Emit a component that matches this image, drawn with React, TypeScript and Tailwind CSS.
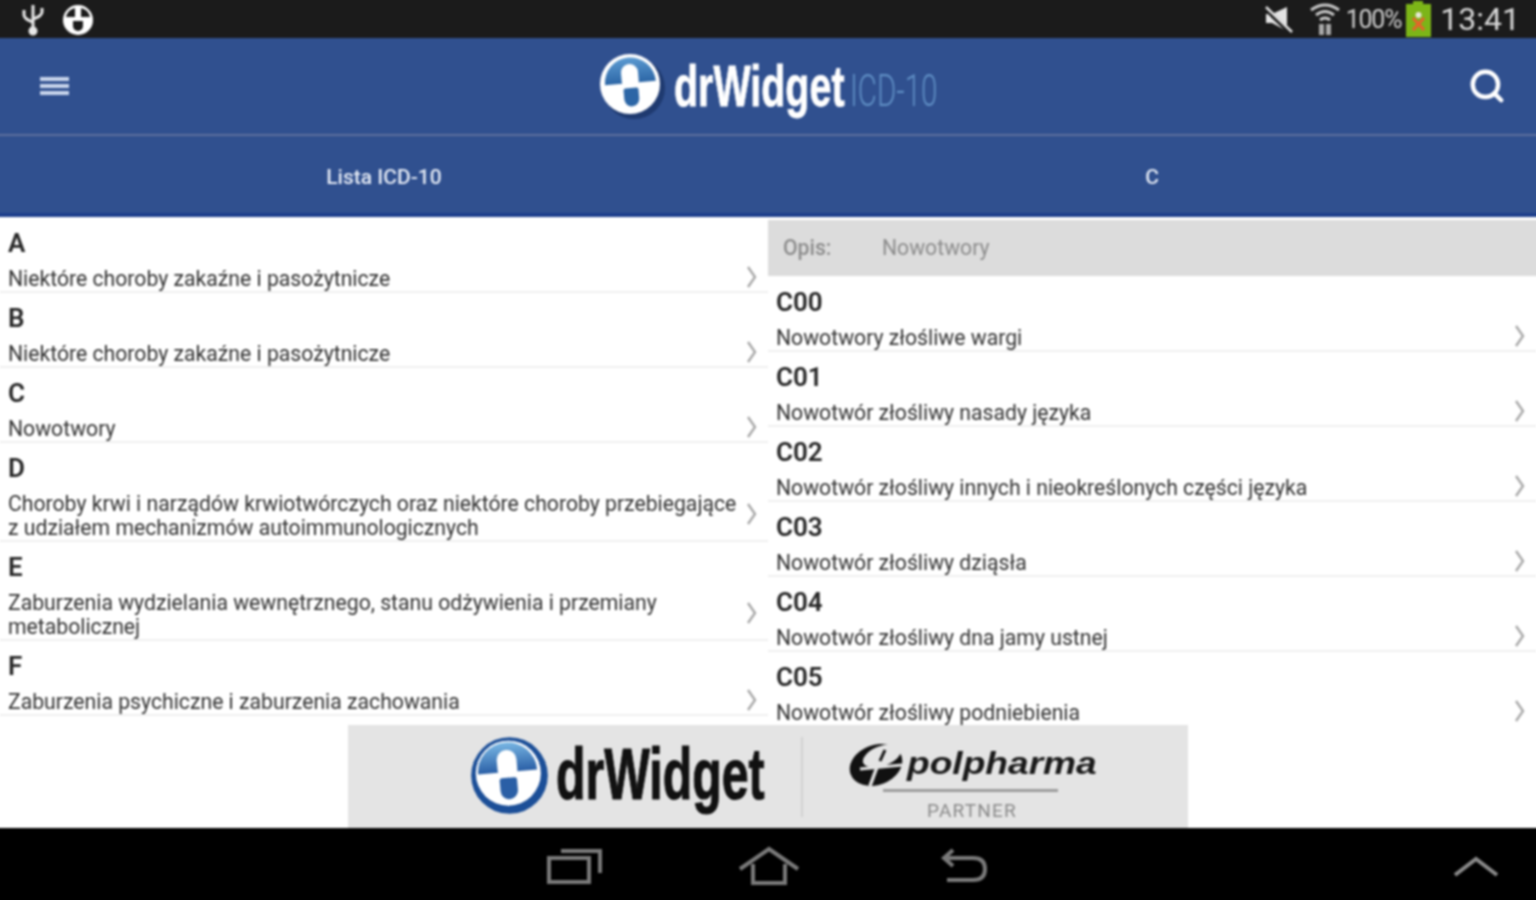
import { Search } from "lucide-react";

const leftRows = [
  { code: "A", text: ["Niektóre choroby zakaźne i pasożytnicze"] },
  { code: "B", text: ["Niektóre choroby zakaźne i pasożytnicze"] },
  { code: "C", text: ["Nowotwory"] },
  {
    code: "D",
    text: [
      "Choroby krwi i narządów krwiotwórczych oraz niektóre choroby przebiegające",
      "z udziałem mechanizmów autoimmunologicznych",
    ],
  },
  {
    code: "E",
    text: ["Zaburzenia wydzielania wewnętrznego, stanu odżywienia i przemiany", "metabolicznej"],
  },
  { code: "F", text: ["Zaburzenia psychiczne i zaburzenia zachowania"] },
];

const rightRows = [
  { code: "C00", text: ["Nowotwory złośliwe wargi"] },
  { code: "C01", text: ["Nowotwór złośliwy nasady języka"] },
  { code: "C02", text: ["Nowotwór złośliwy innych i nieokreślonych części języka"] },
  { code: "C03", text: ["Nowotwór złośliwy dziąsła"] },
  { code: "C04", text: ["Nowotwór złośliwy dna jamy ustnej"] },
  { code: "C05", text: ["Nowotwór złośliwy podniebienia"] },
];

function Chevron() {
  return (
    <svg width="12" height="24" viewBox="0 0 12 24" fill="none" className="shrink-0">
      <path d="M3 2 L10 12 L3 22" stroke="#a8a8a8" strokeWidth="2.4" />
    </svg>
  );
}

function Row({ code, text }: { code: string; text: string[] }) {
  return (
    <div className="flex items-end border-b-2 border-[#efefef] pl-2 pr-[11px]">
      <div className="flex-1 min-w-0">
        <div className="text-[26px] leading-[30px] pt-[10px] box-content font-semibold text-[#262626]">{code}</div>
        <div className="pt-[9px] text-[21.2px] leading-[24px] text-[#333333] whitespace-nowrap">
          {text.map((t) => (
            <div key={t}>{t}</div>
          ))}
        </div>
      </div>
      <div className={text.length > 1 ? "mb-[14px]" : "mb-[2px]"}>
        <Chevron />
      </div>
    </div>
  );
}

function Logo({ id, size, rim, light, dark, ringed }: { id: string; size: number; rim: string; light: string; dark: string; ringed?: boolean }) {
  return (
    <svg width={size} height={size} viewBox="0 0 68 68">
      <defs>
        <linearGradient id={id} x1="0" y1="0" x2="0" y2="1">
          <stop offset="0" stopColor={light} />
          <stop offset="1" stopColor={dark} />
        </linearGradient>
      </defs>
      {ringed ? (
        <>
          <circle cx="34" cy="34" r="33" fill={rim} />
          <circle cx="33" cy="32" r="28" fill="#ffffff" />
        </>
      ) : (
        <>
          <circle cx="36" cy="36" r="31" fill={rim} />
          <circle cx="32" cy="32" r="30" fill="#ffffff" />
        </>
      )}
      <g transform="rotate(-5 32 32)">
        <path d="M7 31 A25.5 25.5 0 0 1 58 31 Z" fill={`url(#${id})`} />
        <rect x="24" y="12" width="17" height="26" rx="8.5" fill="#ffffff" />
        <path d="M25 38 Q25 36 27 36 H38 Q40 36 40 38 V47 A7.5 7.5 0 0 1 25 47 Z" fill={dark} />
      </g>
    </svg>
  );
}

export default function App() {
  return (
    <div className="w-[1536px] h-[900px] overflow-hidden bg-black">
      {/* slightly oversized so the blur does not fade at the page edge */}
      <div className="w-[1544px] h-[908px] -m-[4px] flex flex-col bg-white font-['Roboto','Liberation_Sans',sans-serif] blur-[0.9px]">
        {/* status bar */}
        <div className="h-[42px] shrink-0 pt-[4px] px-[4px] bg-[#1b1b1b] flex items-center text-[#d4d4d4]">
          <svg width="24" height="34" viewBox="0 0 24 34" className="ml-[21px]" fill="none" stroke="#e8e8e8" strokeWidth="3">
            <path d="M12 3 V30" />
            <path d="M3 8 V13 Q3 17 12 20" />
            <path d="M21 6 V10 Q21 14 12 17" />
            <circle cx="12" cy="29" r="3" fill="#e8e8e8" />
          </svg>
          <svg width="34" height="34" viewBox="0 0 34 34" className="ml-[16px]">
            <circle cx="17" cy="18" r="15" fill="#ffffff" />
            <path d="M5 15 A12 12 0 0 1 14 6 L14 15 Z" fill="#1b1b1b" />
            <path d="M20 6 A12 12 0 0 1 29 15 L20 15 Z" fill="#1b1b1b" />
            <path d="M12 19 H22 V24 A5 5 0 0 1 12 24 Z" fill="#1b1b1b" />
          </svg>
          <div className="flex-1" />
          <svg width="32" height="32" viewBox="0 0 32 32" className="mr-[14px]">
            <path d="M3 11 H9 L24 4 V28 L9 20 H3 Z" fill="#e4e4e4" />
            <path d="M2 5 L28 30" stroke="#1b1b1b" strokeWidth="5" />
            <path d="M3 4 L29 29" stroke="#e4e4e4" strokeWidth="2.5" />
          </svg>
          <svg width="32" height="34" viewBox="0 0 32 34" fill="none" stroke="#c8c8c8" strokeWidth="3" className="mr-[5px]">
            <path d="M2 8 Q16 -2 30 8" />
            <path d="M7 13 Q16 6 25 13" />
            <path d="M11 18 Q16 14 21 18" />
            <rect x="10" y="22" width="5" height="11" fill="#a8a8a8" stroke="none" />
            <rect x="17" y="22" width="5" height="11" fill="#a8a8a8" stroke="none" />
          </svg>
          <span className="text-[25px] leading-none tracking-[-1.2px] text-[#cfcfcf]">100%</span>
          <div className="relative ml-[5px] w-[25px] h-[33px] mt-[3px] bg-[#7cb518]">
            <span className="absolute -top-[3px] left-[7px] w-[10px] h-[3px] bg-[#7cb518]" />
            <svg width="25" height="33" viewBox="0 0 25 33" className="absolute inset-0">
              <path d="M7 14 L18 26 M18 14 L7 26" stroke="#e8622c" strokeWidth="3" />
              <circle cx="12.5" cy="11" r="3" fill="#e8e8d8" />
            </svg>
          </div>
          <span className="ml-[9px] mr-[16px] text-[32px] leading-none text-[#d8d8d8]">13:41</span>
        </div>

        {/* app bar */}
        <div className="h-[98px] shrink-0 px-[4px] bg-[#30508f] border-b-2 border-[#5c6f9c] flex items-center">
          <div className="w-[108px] flex justify-center">
            <div className="w-[29px] flex flex-col gap-[3px]">
              <div className="h-[4px] bg-[#c9d5ec]" />
              <div className="h-[4px] bg-[#c9d5ec]" />
              <div className="h-[4px] bg-[#c9d5ec]" />
            </div>
          </div>
          <div className="ml-[490px] flex items-center">
            <Logo id="head-logo" size={68} rim="#1f3a70" light="#5c9bd2" dark="#2c66a6" />
            <span className="ml-[8px] w-[171px] text-[58px] leading-none font-bold text-white whitespace-nowrap font-['Liberation_Sans',sans-serif] origin-left scale-x-[0.68] [-webkit-text-stroke:0.8px_#ffffff]">
              drWidget
            </span>
            <span className="ml-[5px] mt-[9px] w-[87px] text-[44px] leading-none text-[#5f8ec4] whitespace-nowrap font-light origin-left scale-x-[0.67]">
              ICD-10
            </span>
          </div>
          <Search className="ml-auto mr-[30px]" size={38} color="#ffffff" strokeWidth={2.8} />
        </div>

        {/* tabs */}
        <div className="h-[81px] shrink-0 px-[4px] pt-[7px] bg-[#30508f] border-b-4 border-[#1d3f8c] flex items-center text-[#e4eaf5] text-[21px] font-medium">
          <div className="flex-1 text-center">Lista ICD-10</div>
          <div className="flex-1 text-center">C</div>
        </div>

        {/* lists */}
        <div className="h-[508px] shrink-0 pl-[4px] flex overflow-hidden">
          <div className="w-[768px] shrink-0 pt-px">
            {leftRows.map((r) => (
              <Row key={r.code} code={r.code} text={r.text} />
            ))}
          </div>
          <div className="flex-1 min-w-0">
            <div className="mt-[3px] mb-px h-[56px] bg-[#dcdcdc] flex items-center text-[21.2px] text-[#8c8c8c]">
              <span className="ml-[15px] w-[99px] font-medium">Opis:</span>
              <span>Nowotwory</span>
            </div>
            <div className="pr-[4px]">
              {rightRows.map((r) => (
                <Row key={r.code} code={r.code} text={r.text} />
              ))}
            </div>
          </div>
        </div>

        {/* banner */}
        <div className="h-[103px] shrink-0 px-[4px] flex justify-center">
          <div className="w-[840px] bg-[#e4e4e4] flex items-center">
            <div className="ml-[122px] mb-[2px]">
              <Logo id="ad-logo" size={79} rim="#1c4f98" light="#79b7e4" dark="#2a5fa6" ringed />
            </div>
            <span className="ml-[7px] mb-[6px] w-[209px] text-[73px] leading-none font-bold text-[#111111] whitespace-nowrap font-['Liberation_Sans',sans-serif] origin-left scale-x-[0.661] [-webkit-text-stroke:1.2px_#111111]">
              drWidget
            </span>
            <div className="ml-[36px] h-[80px] w-[2px] bg-[#d2d2d2]" />
            <div className="ml-[45px] self-start mt-[13px] flex flex-col items-start">
              <div className="flex items-center">
                <svg width="56" height="50" viewBox="0 0 56 50">
                  <ellipse cx="28" cy="27" rx="27" ry="20" transform="rotate(-20 28 27)" fill="#111111" />
                  <ellipse cx="34" cy="18" rx="20" ry="10" transform="rotate(-20 34 18)" fill="#e4e4e4" />
                  <path d="M36 10 L22 48" stroke="#e4e4e4" strokeWidth="3.5" />
                  <path d="M12 31 L54 27" stroke="#e4e4e4" strokeWidth="3" />
                  <path d="M37 12 L32 23" stroke="#111111" strokeWidth="3" />
                </svg>
                <span className="ml-[3px] w-[189px] text-[32px] leading-none italic font-bold text-[#1a1a1a] whitespace-nowrap font-['Liberation_Sans',sans-serif] origin-left scale-x-[1.16]">
                  polpharma
                </span>
              </div>
              <div className="ml-[35px] mt-px w-[175px] h-[3px] bg-[#9c9c9c]" />
              <span className="ml-[79px] mt-[9px] text-[19px] leading-none tracking-[1.2px] text-[#8a8a8a]">PARTNER</span>
            </div>
          </div>
        </div>

        {/* nav bar */}
        <div className="flex-1 px-[4px] bg-black flex items-center">
          <svg width="56" height="38" viewBox="0 0 56 38" fill="none" stroke="#7a7a7a" strokeWidth="4" className="ml-[547px]">
            <rect x="2" y="11" width="40" height="24" />
            <path d="M14 4 H53 V26" />
          </svg>
          <svg width="62" height="40" viewBox="0 0 62 40" fill="none" stroke="#7a7a7a" strokeWidth="4" className="ml-[135px]">
            <path d="M2 23 L31 3 L60 23" />
            <path d="M15 18 V37 H47 V18" />
          </svg>
          <svg width="48" height="36" viewBox="0 0 48 36" fill="none" stroke="#7a7a7a" strokeWidth="4" className="ml-[139px]">
            <path d="M6 10 H34 Q46 10 46 21 Q46 32 34 32 H8" />
            <path d="M14 2 L5 10 L14 18" />
          </svg>
          <svg width="46" height="22" viewBox="0 0 46 22" fill="none" stroke="#8a8a8a" strokeWidth="4" className="ml-[466px]">
            <path d="M2 20 L23 4 L44 20" />
          </svg>
        </div>
      </div>
    </div>
  );
}
